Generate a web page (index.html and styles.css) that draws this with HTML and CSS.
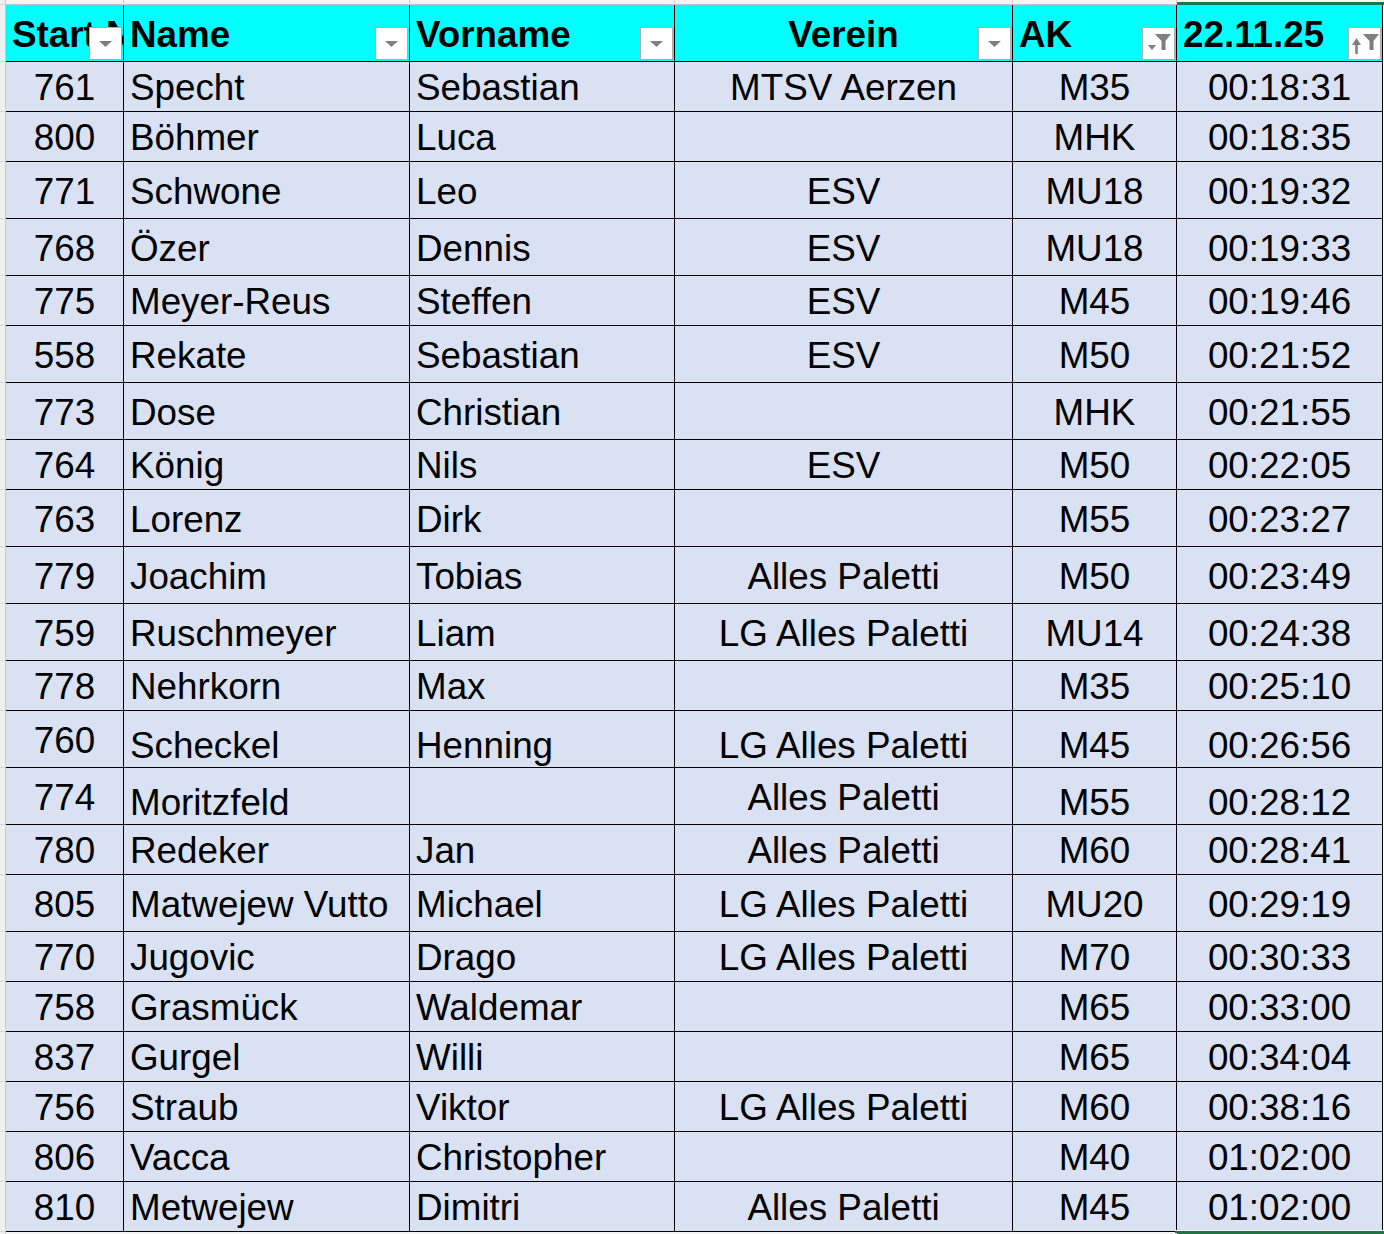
FILE: index.html
```html
<!DOCTYPE html>
<html lang="de">
<head>
<meta charset="utf-8">
<title>Ergebnisliste</title>
<link rel="stylesheet" href="styles.css">
</head>
<body>
<div class="sheet">
  <div class="row top">
    <div class="gut"></div><div class="tc"></div><div class="tc"></div><div class="tc"></div><div class="tc"></div><div class="tc"></div><div class="tc sel"></div><div class="tc sel"></div>
  </div>
  <div class="row head">
    <div class="gut"></div>
    <div class="cell l hd">Start Nr<svg class="btn" viewBox="0 0 33 33"><rect x="0.5" y="0.5" width="32" height="32" class="bx"/><polygon points="10,14 23,14 16.5,20" class="ic"/></svg></div>
    <div class="cell l hd">Name<svg class="btn" viewBox="0 0 33 33"><rect x="0.5" y="0.5" width="32" height="32" class="bx"/><polygon points="10,14 23,14 16.5,20" class="ic"/></svg></div>
    <div class="cell l hd">Vorname<svg class="btn" viewBox="0 0 33 33"><rect x="0.5" y="0.5" width="32" height="32" class="bx"/><polygon points="10,14 23,14 16.5,20" class="ic"/></svg></div>
    <div class="cell hd">Verein<svg class="btn" viewBox="0 0 33 33"><rect x="0.5" y="0.5" width="32" height="32" class="bx"/><polygon points="10,14 23,14 16.5,20" class="ic"/></svg></div>
    <div class="cell l hd">AK<svg class="btn" viewBox="0 0 33 33"><rect x="0.5" y="0.5" width="32" height="32" class="bx"/><polygon points="13,7 29,7 23.5,14 23.5,23 19.5,23 19.5,14" class="ic"/><polygon points="6,18 14,18 10,23" class="ic"/></svg></div>
    <div class="cell l hd">22.11.25<svg class="btn" viewBox="0 0 33 33"><rect x="0.5" y="0.5" width="32" height="32" class="bx"/><polygon points="15,7 31,7 25.5,14 25.5,23 21.5,23 21.5,14" class="ic"/><polygon points="4,18 13,18 8.5,11" class="ic"/><rect x="7.25" y="17" width="2.5" height="10" class="ic"/></svg></div>
    <div class="edge"></div>
  </div>

  <div class="row"><div class="gut"></div><div class="cell">761</div><div class="cell l">Specht</div><div class="cell l">Sebastian</div><div class="cell">MTSV Aerzen</div><div class="cell">M35</div><div class="cell">00:18:31</div><div class="edge"></div></div>
  <div class="row"><div class="gut"></div><div class="cell">800</div><div class="cell l">Böhmer</div><div class="cell l">Luca</div><div class="cell"></div><div class="cell">MHK</div><div class="cell">00:18:35</div><div class="edge"></div></div>
  <div class="row tall"><div class="gut"></div><div class="cell">771</div><div class="cell l">Schwone</div><div class="cell l">Leo</div><div class="cell">ESV</div><div class="cell">MU18</div><div class="cell">00:19:32</div><div class="edge"></div></div>
  <div class="row tall"><div class="gut"></div><div class="cell">768</div><div class="cell l">Özer</div><div class="cell l">Dennis</div><div class="cell">ESV</div><div class="cell">MU18</div><div class="cell">00:19:33</div><div class="edge"></div></div>
  <div class="row"><div class="gut"></div><div class="cell">775</div><div class="cell l">Meyer-Reus</div><div class="cell l">Steffen</div><div class="cell">ESV</div><div class="cell">M45</div><div class="cell">00:19:46</div><div class="edge"></div></div>
  <div class="row tall"><div class="gut"></div><div class="cell">558</div><div class="cell l">Rekate</div><div class="cell l">Sebastian</div><div class="cell">ESV</div><div class="cell">M50</div><div class="cell">00:21:52</div><div class="edge"></div></div>
  <div class="row tall"><div class="gut"></div><div class="cell">773</div><div class="cell l">Dose</div><div class="cell l">Christian</div><div class="cell"></div><div class="cell">MHK</div><div class="cell">00:21:55</div><div class="edge"></div></div>
  <div class="row"><div class="gut"></div><div class="cell">764</div><div class="cell l">König</div><div class="cell l">Nils</div><div class="cell">ESV</div><div class="cell">M50</div><div class="cell">00:22:05</div><div class="edge"></div></div>
  <div class="row tall"><div class="gut"></div><div class="cell">763</div><div class="cell l">Lorenz</div><div class="cell l">Dirk</div><div class="cell"></div><div class="cell">M55</div><div class="cell">00:23:27</div><div class="edge"></div></div>
  <div class="row tall"><div class="gut"></div><div class="cell">779</div><div class="cell l">Joachim</div><div class="cell l">Tobias</div><div class="cell">Alles Paletti</div><div class="cell">M50</div><div class="cell">00:23:49</div><div class="edge"></div></div>
  <div class="row tall"><div class="gut"></div><div class="cell">759</div><div class="cell l">Ruschmeyer</div><div class="cell l">Liam</div><div class="cell">LG Alles Paletti</div><div class="cell">MU14</div><div class="cell">00:24:38</div><div class="edge"></div></div>
  <div class="row"><div class="gut"></div><div class="cell">778</div><div class="cell l">Nehrkorn</div><div class="cell l">Max</div><div class="cell"></div><div class="cell">M35</div><div class="cell">00:25:10</div><div class="edge"></div></div>
  <div class="row tall"><div class="gut"></div><div class="cell">760</div><div class="cell l b">Scheckel</div><div class="cell l b">Henning</div><div class="cell b">LG Alles Paletti</div><div class="cell b">M45</div><div class="cell b">00:26:56</div><div class="edge"></div></div>
  <div class="row tall"><div class="gut"></div><div class="cell">774</div><div class="cell l b">Moritzfeld</div><div class="cell l b"></div><div class="cell">Alles Paletti</div><div class="cell b">M55</div><div class="cell b">00:28:12</div><div class="edge"></div></div>
  <div class="row"><div class="gut"></div><div class="cell">780</div><div class="cell l">Redeker</div><div class="cell l">Jan</div><div class="cell">Alles Paletti</div><div class="cell">M60</div><div class="cell">00:28:41</div><div class="edge"></div></div>
  <div class="row tall"><div class="gut"></div><div class="cell">805</div><div class="cell l">Matwejew Vutto</div><div class="cell l">Michael</div><div class="cell">LG Alles Paletti</div><div class="cell">MU20</div><div class="cell">00:29:19</div><div class="edge"></div></div>
  <div class="row"><div class="gut"></div><div class="cell">770</div><div class="cell l">Jugovic</div><div class="cell l">Drago</div><div class="cell">LG Alles Paletti</div><div class="cell">M70</div><div class="cell">00:30:33</div><div class="edge"></div></div>
  <div class="row"><div class="gut"></div><div class="cell">758</div><div class="cell l">Grasmück</div><div class="cell l">Waldemar</div><div class="cell"></div><div class="cell">M65</div><div class="cell">00:33:00</div><div class="edge"></div></div>
  <div class="row"><div class="gut"></div><div class="cell">837</div><div class="cell l">Gurgel</div><div class="cell l">Willi</div><div class="cell"></div><div class="cell">M65</div><div class="cell">00:34:04</div><div class="edge"></div></div>
  <div class="row"><div class="gut"></div><div class="cell">756</div><div class="cell l">Straub</div><div class="cell l">Viktor</div><div class="cell">LG Alles Paletti</div><div class="cell">M60</div><div class="cell">00:38:16</div><div class="edge"></div></div>
  <div class="row"><div class="gut"></div><div class="cell">806</div><div class="cell l">Vacca</div><div class="cell l">Christopher</div><div class="cell"></div><div class="cell">M40</div><div class="cell">01:02:00</div><div class="edge"></div></div>
  <div class="row last"><div class="gut"></div><div class="cell">810</div><div class="cell l">Metwejew</div><div class="cell l">Dimitri</div><div class="cell">Alles Paletti</div><div class="cell">M45</div><div class="cell active">01:02:00</div><div class="edge"></div></div>
  <div class="row foot">
    <div class="gut"></div><div class="fc"></div><div class="fc"></div><div class="fc"></div><div class="fc"></div><div class="fc"></div><div class="fc sel"></div><div class="fc sel"></div>
  </div>
</div>
</body>
</html>
```

FILE: styles.css
```css
html, body {
  margin: 0;
  padding: 0;
  background: #ffffff;
}

body {
  font-family: "Liberation Sans", Arial, sans-serif;
  color: #000;
}

.sheet {
  width: 1384px;
  overflow: hidden;
}

.row {
  display: grid;
  grid-template-columns: 6px 118px 286px 265px 338px 164px 206px 1fr;
  height: 50px;
}

.row.tall,
.row.head {
  height: 57px;
}

.row.top {
  height: 5px;
}

.row.foot {
  height: 3px;
}

.gut {
  box-sizing: border-box;
  background: #f0f0f0;
  border-right: 1px solid #c9c9c9;
  border-bottom: 1px solid #d6d6d6;
}

.tc {
  box-sizing: border-box;
  background: #f3f3f3;
  border-right: 1px solid #d4d4d4;
  border-bottom: 1px solid #c6c6c6;
}

.tc.sel {
  border-right: none;
  border-bottom: 3px solid #217346;
}

.fc {
  background: #f3f3f3;
}

.fc.sel {
  background: #217346;
}

.edge {
  background: #ffffff;
}

.cell {
  box-sizing: border-box;
  background: #d9e1f2;
  border-right: 1px solid #000;
  border-bottom: 1px solid #000;
  font-size: 36.8px;
  line-height: normal;
  display: flex;
  align-items: center;
  justify-content: center;
  padding-top: 3px;
  white-space: nowrap;
  overflow: hidden;
  min-width: 0;
}

.cell.l {
  justify-content: flex-start;
  padding-left: 6px;
}

.cell.b {
  align-items: flex-end;
  padding-top: 0;
  padding-bottom: 0;
}

.cell.hd {
  background: #00ffff;
  font-weight: bold;
  position: relative;
  padding-top: 4px;
}

.cell.active {
  position: relative;
  overflow: visible;
}

.cell.active::after {
  content: "";
  position: absolute;
  left: -2px;
  right: -3px;
  bottom: -2px;
  height: 2px;
  background: #217346;
  border-top: 1px solid #ffffff;
}

.btn {
  position: absolute;
  right: 1px;
  bottom: 1px;
  width: 33px;
  height: 33px;
}

.bx {
  fill: #ffffff;
  stroke: #acacac;
  stroke-width: 1;
}

.ic {
  fill: #7f7f7f;
}
```
